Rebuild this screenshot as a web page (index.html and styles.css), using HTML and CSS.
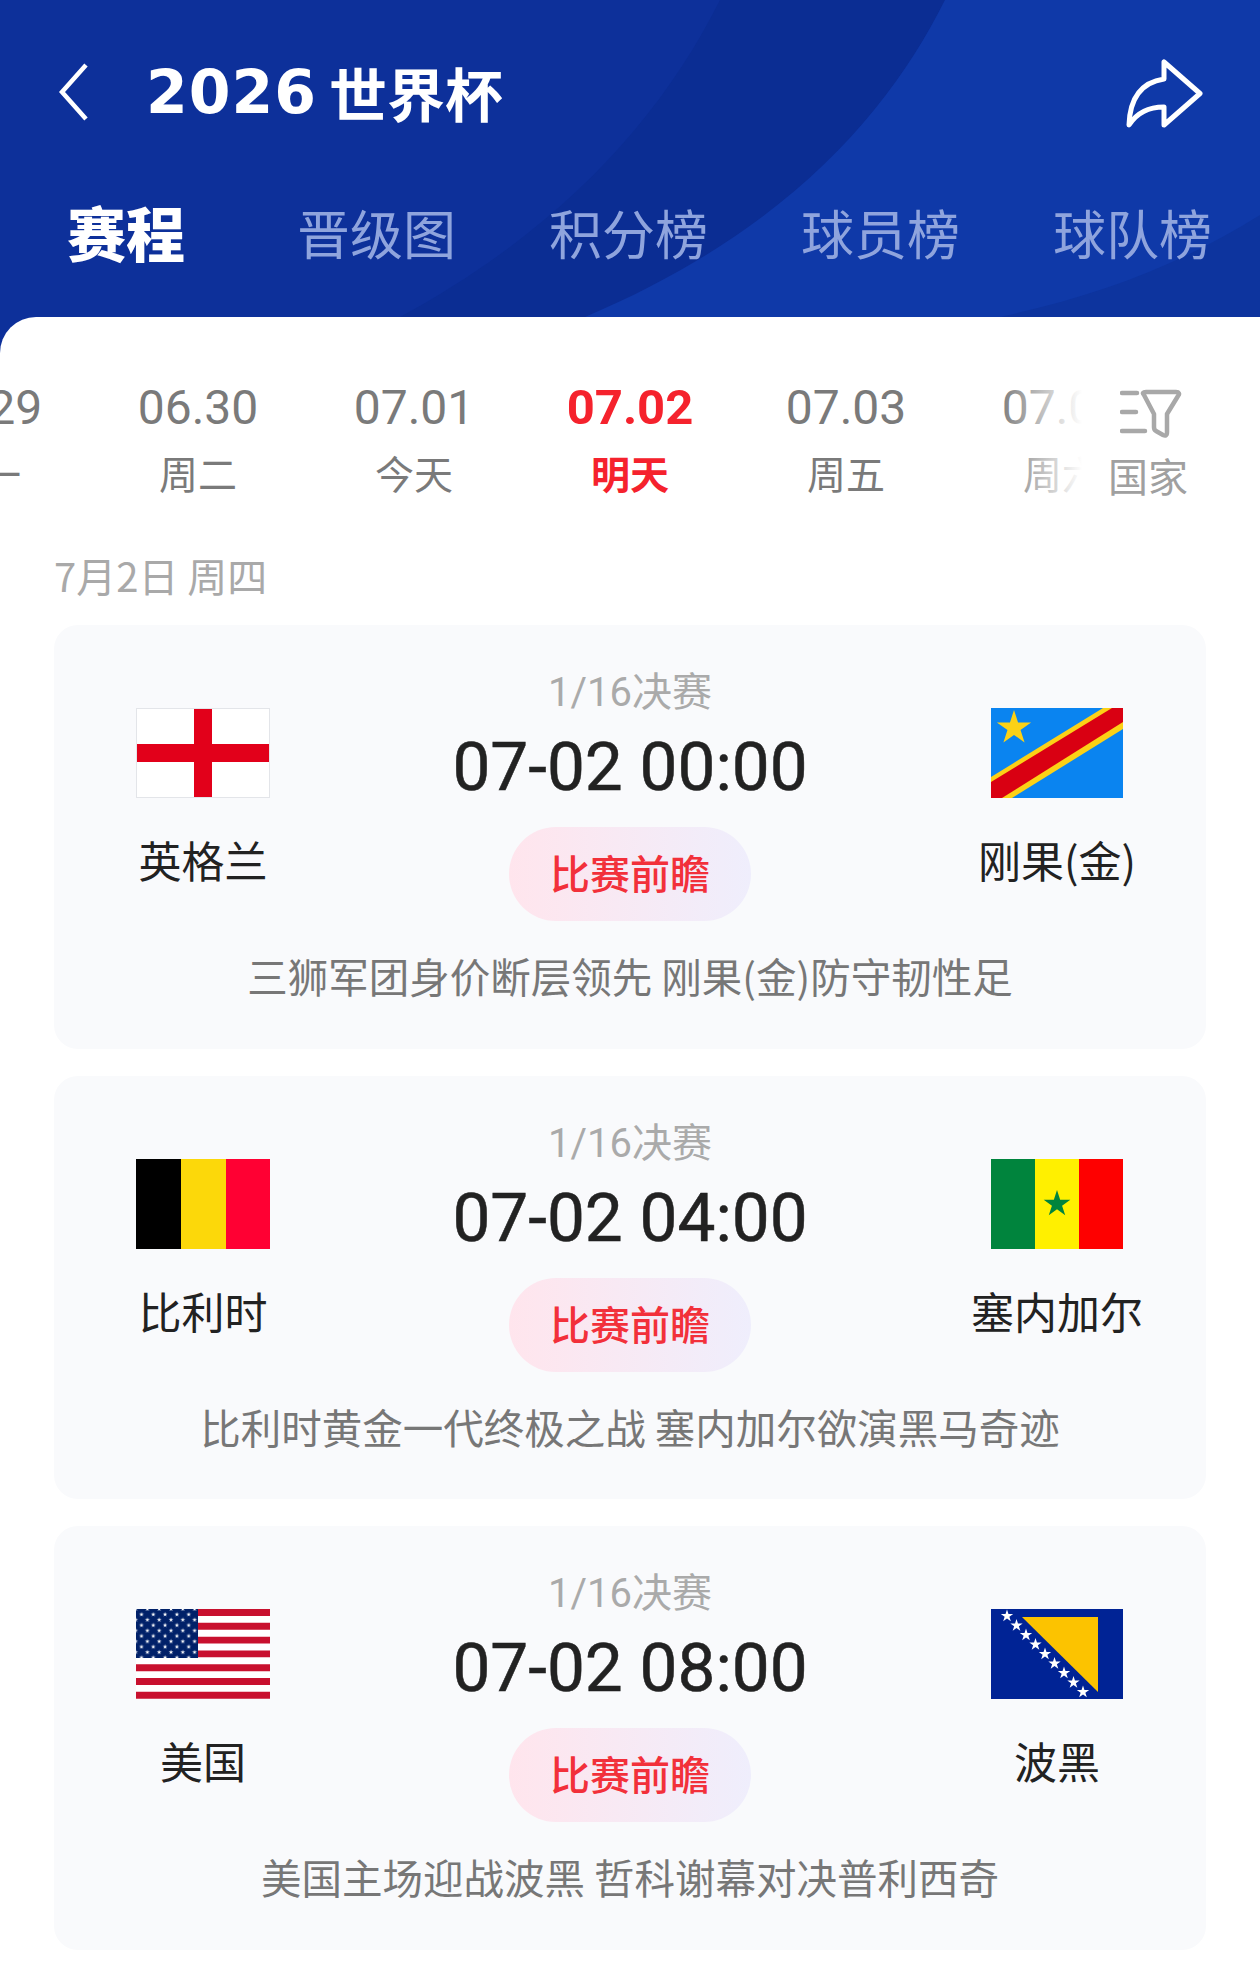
FILE: index.html
```html
<!DOCTYPE html>
<html lang="zh-CN">
<head>
<meta charset="utf-8">
<title>2026 世界杯</title>
<link rel="stylesheet" href="styles.css">
</head>
<body>
<svg class="defs" width="0" height="0">
  <defs>
    <polygon id="star" points="0,-1 0.225,-0.309 0.951,-0.309 0.363,0.118 0.588,0.809 0,0.382 -0.588,0.809 -0.363,0.118 -0.951,-0.309 -0.225,-0.309"/>
    <pattern id="us-stars" x="2.5" y="0" width="11.8" height="10.8" patternUnits="userSpaceOnUse">
      <use href="#star" transform="translate(3 5.4) scale(2.5)" fill="#fff"/>
      <use href="#star" transform="translate(8.9 0) scale(2.5)" fill="#fff"/>
      <use href="#star" transform="translate(8.9 10.8) scale(2.5)" fill="#fff"/>
    </pattern>
  </defs>
</svg>
<div class="page">
  <header class="hero">
    <svg class="hero-bg" viewBox="0 0 1260 317" preserveAspectRatio="none" aria-hidden="true">
      <path d="M720 0H945C890 110 790 230 590 317H400C560 230 660 120 720 0Z" fill="#0b2d93"/>
      <path d="M945 0H1260V317H585C790 230 890 110 945 0Z" fill="#0f39a8"/>
      <path d="M1260 215C1180 265 1100 295 1000 317H1260Z" fill="#0d349e"/>
    </svg>
    <div class="hero-bar">
      <svg class="back" viewBox="0 0 30 60" aria-hidden="true"><path d="M28 3L4 30L28 57" fill="none" stroke="#fff" stroke-width="4.5"/></svg>
      <h1 class="title"><span class="title-num">2026</span><span class="title-cjk">世界杯</span></h1>
      <svg class="share" viewBox="0 0 80 72" aria-hidden="true"><path d="M38 3V20C18 23 4 36 3 66C12 52 24 48 38 48V66L74 34.500Z" fill="none" stroke="#fff" stroke-width="5" stroke-linejoin="round" stroke-linecap="round"/></svg>
    </div>
    <nav class="tabs">
      <span class="tab tab-on">赛程</span>
      <span class="tab">晋级图</span>
      <span class="tab">积分榜</span>
      <span class="tab">球员榜</span>
      <span class="tab">球队榜</span>
    </nav>
  </header>
  <main class="sheet">
    <div class="strip-wrap">
      <div class="strip">
        <div class="day"><div class="day-date">06.29</div><div class="day-week">周一</div></div>
        <div class="day"><div class="day-date">06.30</div><div class="day-week">周二</div></div>
        <div class="day"><div class="day-date">07.01</div><div class="day-week">今天</div></div>
        <div class="day day-on"><div class="day-date">07.02</div><div class="day-week">明天</div></div>
        <div class="day"><div class="day-date">07.03</div><div class="day-week">周五</div></div>
        <div class="day"><div class="day-date">07.04</div><div class="day-week">周六</div></div>
        <div class="day"><div class="day-date">07.05</div><div class="day-week">周日</div></div>
      </div>
      <div class="filter">
        <svg class="filter-icon" viewBox="0 0 62 52" aria-hidden="true">
          <path d="M2 5H17M2 24H16M2 43H25" fill="none" stroke="#a8a8a8" stroke-width="4.500" stroke-linecap="round"/>
          <path d="M24 7C22 5 23 4 26 4H56C59 4 60 6 58 8L47 26V44C47 48 45 48 43 47L36 43C34 42 34 41 34 39V26Z" fill="none" stroke="#a8a8a8" stroke-width="4.500" stroke-linejoin="round"/>
        </svg>
        <span class="filter-label">国家</span>
      </div>
    </div>
    <div class="section-date">7月2日 周四</div>
    <div class="cards">
      <article class="card">
        <div class="match">
          <div class="team">
            <svg class="flag flag-en" viewBox="0 0 134 90"><rect width="134" height="90" fill="#fff"/><rect x="58" width="18" height="90" fill="#e2001a"/><rect y="36" width="134" height="18" fill="#e2001a"/></svg>
            <div class="team-name">英格兰</div>
          </div>
          <div class="mid">
            <div class="round">1/16决赛</div>
            <div class="time">07-02 00:00</div>
            <div class="preview">比赛前瞻</div>
          </div>
          <div class="team">
            <svg class="flag" viewBox="0 0 132 90"><rect width="132" height="90" fill="#0a84f0"/><polygon points="0,69 112,0 132,0 132,21 21,90 0,90" fill="#fcd116"/><polygon points="0,74 121,0 132,0 132,14 11,90 0,90" fill="#d90012"/><use href="#star" transform="translate(23 20) scale(18)" fill="#fcd116"/></svg>
            <div class="team-name">刚果(金)</div>
          </div>
        </div>
        <p class="desc">三狮军团身价断层领先 刚果(金)防守韧性足</p>
      </article>
      <article class="card">
        <div class="match">
          <div class="team">
            <svg class="flag" viewBox="0 0 134 90"><rect width="45" height="90" fill="#000"/><rect x="45" width="45" height="90" fill="#fcd80a"/><rect x="90" width="44" height="90" fill="#ff0033"/></svg>
            <div class="team-name">比利时</div>
          </div>
          <div class="mid">
            <div class="round">1/16决赛</div>
            <div class="time">07-02 04:00</div>
            <div class="preview">比赛前瞻</div>
          </div>
          <div class="team">
            <svg class="flag" viewBox="0 0 132 90"><rect width="44" height="90" fill="#00843d"/><rect x="44" width="44" height="90" fill="#fff000"/><rect x="88" width="44" height="90" fill="#fe0000"/><use href="#star" transform="translate(66 45) scale(14)" fill="#00843d"/></svg>
            <div class="team-name">塞内加尔</div>
          </div>
        </div>
        <p class="desc">比利时黄金一代终极之战 塞内加尔欲演黑马奇迹</p>
      </article>
      <article class="card">
        <div class="match">
          <div class="team">
            <svg class="flag" viewBox="0 0 134 90"><rect width="134" height="90" fill="#fff"/><path d="M0 3.500H134M0 17.300H134M0 31.100H134M0 44.900H134M0 58.700H134M0 72.500H134M0 86.300H134" stroke="#c8102e" stroke-width="6.900" fill="none"/><rect width="62" height="49" fill="#012169"/><rect width="62" height="49" fill="url(#us-stars)"/></svg>
            <div class="team-name">美国</div>
          </div>
          <div class="mid">
            <div class="round">1/16决赛</div>
            <div class="time">07-02 08:00</div>
            <div class="preview">比赛前瞻</div>
          </div>
          <div class="team">
            <svg class="flag" viewBox="0 0 132 90"><rect width="132" height="90" fill="#002395"/><polygon points="31,8 107,8 107,83" fill="#fcc300"/><g fill="#fff"><use href="#star" transform="translate(16 7) scale(6.500)"/><use href="#star" transform="translate(25.500 16.500) scale(6.500)"/><use href="#star" transform="translate(35 26) scale(6.500)"/><use href="#star" transform="translate(44.500 35.500) scale(6.500)"/><use href="#star" transform="translate(54 45) scale(6.500)"/><use href="#star" transform="translate(63.500 54.500) scale(6.500)"/><use href="#star" transform="translate(73 64) scale(6.500)"/><use href="#star" transform="translate(82.500 73.500) scale(6.500)"/><use href="#star" transform="translate(92 83) scale(6.500)"/></g></svg>
            <div class="team-name">波黑</div>
          </div>
        </div>
        <p class="desc">美国主场迎战波黑 哲科谢幕对决普利西奇</p>
      </article>
    </div>
  </main>
</div>
</body>
</html>
```

FILE: styles.css
```css
* { box-sizing: border-box; }
html, body { margin: 0; padding: 0; }
body {
  font-family: "Noto Sans CJK SC", "Noto Sans", sans-serif;
  background: #0d309a;
}
.defs { position: absolute; }
.page { width: 1260px; height: 1980px; overflow: hidden; display: flex; flex-direction: column; }

.hero {
  position: relative;
  height: 347px;
  margin-bottom: -30px;
  padding-top: 52px;
  background: #0d309a;
}
.hero-bg { position: absolute; left: 0; top: 0; width: 1260px; height: 317px; }
.hero-bar, .tabs { position: relative; }
.hero-bar {
  display: flex;
  align-items: center;
  height: 80px;
  padding: 0 54px 0 58px;
}
.back { width: 30px; height: 60px; flex: none; }
.title {
  margin: 0 0 0 58px;
  flex: 1;
  display: flex;
  align-items: center;
  color: #fff;
  font-weight: 700;
  line-height: 80px;
}
.title-num {
  font-family: "DejaVu Sans", sans-serif;
  font-size: 60px;
  letter-spacing: 1px;
  margin-right: 12px;
}
.title-cjk { font-size: 58px; }
.share { width: 80px; height: 72px; flex: none; margin-top: 5px; }

.tabs {
  display: flex;
  gap: 93px;
  margin-top: 65px;
  padding-left: 67px;
  height: 70px;
  align-items: center;
}
.tab {
  color: #8fa4dd;
  font-size: 53px;
  line-height: 70px;
  font-weight: 400;
}
.tab-on {
  color: #fff;
  font-size: 59px;
  font-weight: 900;
  margin-right: 19px;
}

.sheet {
  position: relative;
  flex: 1;
  background: #fff;
  border-radius: 36px 36px 0 0;
}
.strip-wrap {
  position: relative;
  height: 183px;
  padding-top: 61px;
  overflow: hidden;
}
.strip { display: flex; justify-content: center; }
.day { flex: none; width: 216px; text-align: center; color: #7a7a7a; }
.day-date {
  font-family: Roboto, "Noto Sans", sans-serif;
  font-size: 48px;
  line-height: 60px;
  font-weight: 400;
}
.day-week { font-size: 39px; line-height: 50px; margin-top: 9px; }
.day-on { color: #f5222d; }
.day-on .day-date { font-weight: 700; font-size: 49px; }
.day-on .day-week { font-weight: 700; }

.filter {
  position: absolute;
  right: 0;
  top: 0;
  width: 262px;
  height: 183px;
  padding-top: 71px;
  padding-left: 110px;
  display: flex;
  flex-direction: column;
  background: linear-gradient(90deg, rgba(255,255,255,0) 0, #fff 84px);
}
.filter-icon { width: 62px; height: 52px; margin-left: 12px; }
.filter-label { font-size: 40px; line-height: 50px; color: #a0a0a0; margin-top: 10px; }

.section-date {
  margin: 50px 0 25px 54px;
  font-size: 40px;
  line-height: 50px;
  color: #a9a9a9;
}

.cards { display: flex; flex-direction: column; gap: 27px; padding: 0 54px; }
.card {
  height: 423.500px;
  padding-top: 42px;
  background: #f9fafc;
  border-radius: 24px;
}
.match { display: grid; grid-template-columns: 298px 1fr 298px; }
.team { display: flex; flex-direction: column; align-items: center; padding-top: 41px; }
.flag { display: block; width: 134px; height: 90px; }
.flag-en { outline: 1px solid #e3e5e9; outline-offset: -1px; }
.team-name { margin-top: 36px; font-size: 43px; line-height: 50px; color: #222; white-space: nowrap; }
.mid { display: flex; flex-direction: column; align-items: center; }
.round { font-size: 40px; line-height: 50px; color: #aaa; font-family: Roboto, "Noto Sans CJK SC", sans-serif; margin-top: 1px; }
.time {
  margin-top: 9px;
  font-family: Roboto, sans-serif;
  font-size: 67.500px;
  font-weight: 400;
  line-height: 80px;
  color: #222;
  white-space: nowrap;
  -webkit-text-stroke: 0.5px #222;
}
.preview {
  margin-top: 20px;
  width: 242px;
  height: 94px;
  border-radius: 47px;
  background: linear-gradient(90deg, #ffe5ed 0%, #efeefc 100%);
  color: #f2303a;
  font-size: 40px;
  font-weight: 500;
  line-height: 90px;
  text-align: center;
}
.desc {
  margin: 30px 0 0;
  text-align: center;
  font-size: 40.500px;
  line-height: 50px;
  color: #777;
  white-space: nowrap;
}
```
